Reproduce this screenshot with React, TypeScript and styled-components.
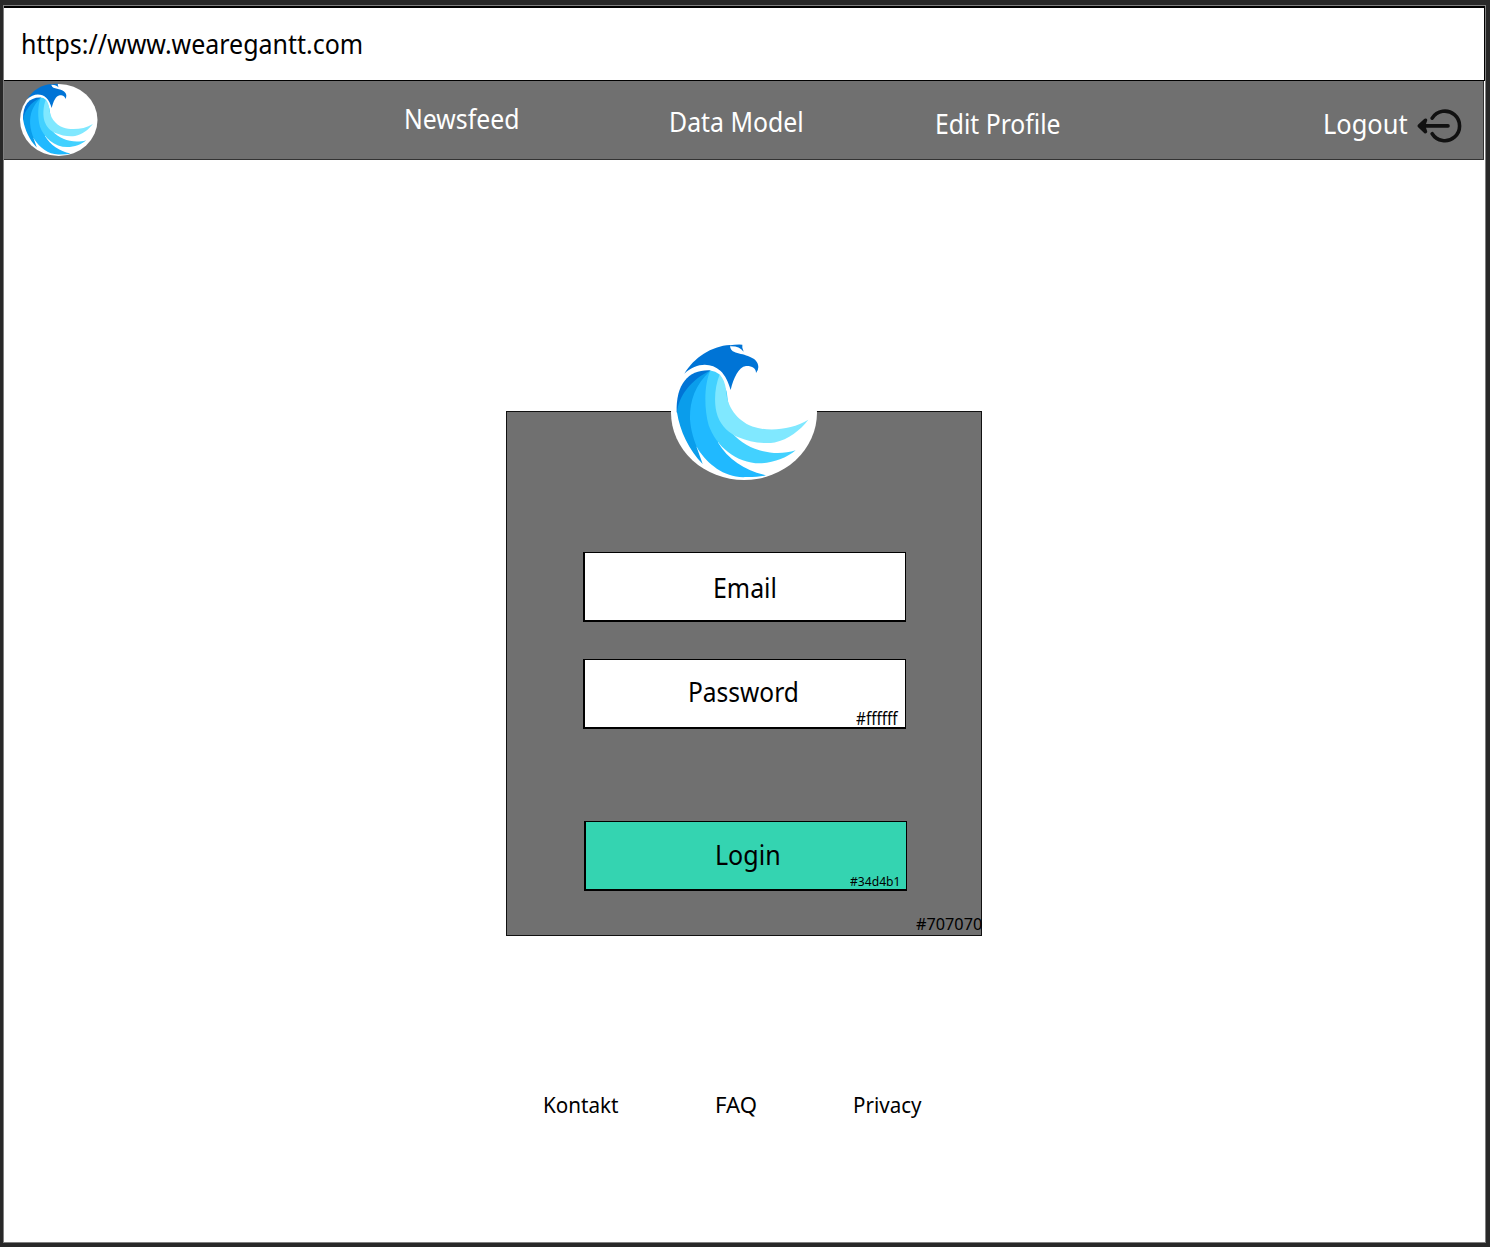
import React from "react";
import styled, { createGlobalStyle } from "styled-components";

const GlobalStyle = createGlobalStyle`
  * { box-sizing: border-box; }
  body { margin: 0; background: #282828; }
`;

const Screen = styled.div`
  height: 1247px;
  padding: 5px 4px 4px 3px;
  background: #282828;
  font-family: "Noto Sans", "Open Sans", sans-serif;
  color: #000;
`;

const Page = styled.div`
  display: flex;
  flex-direction: column;
  height: 1238px;
  border: 1px solid #808080;
  background: #fff;
`;

const Label = styled.span<{ $size?: number; $fit?: number; $width: number }>`
  display: block;
  flex: none;
  width: ${(p) => p.$width}px;
  font-size: ${(p) => p.$size ?? 26.5}px;
  line-height: 36px;
  white-space: nowrap;
  transform: scaleX(${(p) => p.$fit ?? 0.955});
  transform-origin: left;
`;

const AddressBar = styled.header`
  flex: none;
  height: 75px;
  padding: 18px 0 0 17px;
  border: 1px solid #000;
  border-top-width: 2px;
  border-left: 0;
`;

const Nav = styled.nav`
  flex: none;
  display: flex;
  align-items: flex-start;
  width: 1480px;
  height: 79px;
  padding: 3px 20px 0 16px;
  border-right: 1px solid #333;
  border-bottom: 1px solid #333;
  background: #707070;
  color: #fff;
`;

const NavLink = styled.div<{ $drop: number; $gap: number }>`
  margin: ${(p) => p.$drop}px 0 0 ${(p) => p.$gap}px;
`;

const Logout = styled.div`
  display: flex;
  margin: 22px 0 0 auto;
  svg { margin-left: 9px; margin-top: 3px; }
`;

const Main = styled.main`
  display: flex;
  justify-content: center;
  padding: 251px 0 0 0;
`;

const Card = styled.form`
  display: flex;
  flex-direction: column;
  align-items: center;
  width: 476px;
  height: 525px;
  margin-right: 2px;
  border: 1px solid #111;
  background: #707070;
`;

const CardLogo = styled.div`
  height: 135px;
  margin: -67px 0 72px;
`;

const Field = styled.div<{ $bg?: string; $gap?: number; $pad: number; $shift?: number }>`
  flex: none;
  display: flex;
  flex-direction: column;
  align-items: center;
  width: 323px;
  height: 70px;
  margin: ${(p) => p.$gap ?? 0}px 0 0 ${(p) => p.$shift ?? 1}px;
  padding-top: ${(p) => p.$pad}px;
  border: solid #000;
  border-width: 1px 1px 2px 2px;
  background: ${(p) => p.$bg ?? "#fff"};
`;

const ColorNote = styled.div<{ $top: number; $right: number }>`
  align-self: flex-end;
  margin: ${(p) => p.$top}px ${(p) => p.$right}px 0 0;
`;

const Footer = styled.footer`
  display: flex;
  gap: 97px;
  padding: 151px 0 0 539px;
`;

function Logo({ width, height }: { width: number; height: number }) {
  return (
    <svg width={width} height={height} viewBox="63 46 438 404" preserveAspectRatio="none" overflow="visible" display="block">
      <ellipse cx="282" cy="248" rx="219" ry="202" fill="#fff" />
      <path fill="#0074d6" d="M103 132C132 84 184 49 240 46C240 60 247 66 262 70C289 77 325 84 325 112Q325 123 318 130C319 115 304 108 288 109C265 112 251 145 242 181C235 157 226 137 211 123C184 98 139 97 103 132Z" />
      <path fill="#0074d6" d="M240 47Q258 44 277 45L277 54L281 66C271 54 259 49 240 50Z" />
      <path fill="#0074d6" d="M181 122C118 119 77 160 80 248L115 230Z" />
      <path fill="#0a9deb" d="M181 122C123 149 86 198 81 248C90 303 116 360 158 402L140 352L165 270Z" />
      <path fill="#20b9ff" d="M181 122C133 169 119 215 120 268C122 300 132 334 144 358C174 404 227 446 290 441Q330 441 348 436C285 422 235 390 204 338L220 230Z" />
      <path fill="#42d1ff" d="M181 122C162 164 162 238 176 286C198 348 258 400 330 400C370 399 412 383 437 361C372 382 290 361 247 310L230 185L209 134Q196 123 181 122Z" />
      <path fill="#80e8ff" d="M209 134C194 170 190 224 203 259C216 292 237 309 263 321C297 335 337 343 374 338C416 329 450 302 475 270C425 300 356 307 307 290C261 272 230 230 228 180C226 160 219 145 209 134Z" />
    </svg>
  );
}

function LogoutIcon() {
  return (
    <svg width="46" height="34" viewBox="0 0 46 34" fill="none" stroke="#111" strokeWidth="3.6" strokeLinecap="round" strokeLinejoin="round">
      <path d="M15.2 9.1A14.8 14.8 0 1 1 15.2 24.7" />
      <path d="M31 16.9H4" />
      <path d="M8.4 11.2L2.4 16.9L8.4 22.6L6.4 16.9Z" fill="#111" />
    </svg>
  );
}

export default function App() {
  return (
    <Screen>
      <GlobalStyle />
      <Page>
        <AddressBar>
          <Label $fit={0.942} $width={342}>https://www.wearegantt.com</Label>
        </AddressBar>
        <Nav>
          <Logo width={77.5} height={72} />
          <NavLink $drop={17} $gap={306}><Label $fit={0.935} $width={115}>Newsfeed</Label></NavLink>
          <NavLink $drop={20} $gap={150}><Label $fit={0.937} $width={134}>Data Model</Label></NavLink>
          <NavLink $drop={22} $gap={132}><Label $fit={0.933} $width={125}>Edit Profile</Label></NavLink>
          <Logout>
            <Label $fit={0.96} $width={85}>Logout</Label>
            <LogoutIcon />
          </Logout>
        </Nav>
        <Main>
          <Card>
            <CardLogo><Logo width={146} height={135} /></CardLogo>
            <Field $pad={17}><Label $fit={0.94} $width={64}>Email</Label></Field>
            <Field $pad={14} $gap={37}>
              <Label $fit={0.925} $width={114}>Password</Label>
              <ColorNote $top={-10} $right={6}><Label $size={17.5} $fit={0.875} $width={43}>#ffffff</Label></ColorNote>
            </Field>
            <Field $pad={15} $gap={92} $bg="#34d4b1" $shift={3}>
              <Label $fit={0.945} $width={62}>Login</Label>
              <ColorNote $top={-10} $right={5}><Label $size={12.7} $width={51}>#34d4b1</Label></ColorNote>
            </Field>
            <ColorNote $top={15} $right={-1}><Label $size={17} $width={66}>#707070</Label></ColorNote>
          </Card>
        </Main>
        <Footer>
          <Label $size={21.5} $fit={0.96} $width={75}>Kontakt</Label>
          <Label $size={21.5} $fit={1.03} $width={41}>FAQ</Label>
          <Label $size={21.5} $width={70}>Privacy</Label>
        </Footer>
      </Page>
    </Screen>
  );
}
